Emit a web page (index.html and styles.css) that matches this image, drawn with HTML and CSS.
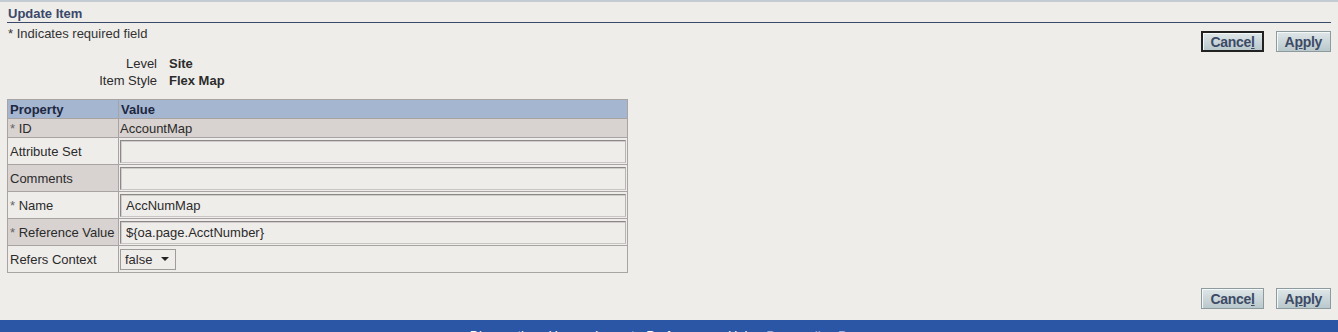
FILE: index.html
```html
<!DOCTYPE html>
<html lang="en">
<head>
    <meta charset="UTF-8">
    <title>Update Item</title>
    <link rel="stylesheet" href="styles.css">
</head>
<body>
    <div class="topline"></div>
    <div class="page">
        <h1 class="title">Update Item</h1>
        <div class="top-row">
            <div class="top-left">
                <div class="required">* Indicates required field</div>
                <div class="info">
                    <span class="info-label">Level</span><span class="info-value">Site</span>
                    <span class="info-label">Item Style</span><span class="info-value">Flex Map</span>
                </div>
            </div>
            <div class="buttons top-buttons">
                <button class="btn btn-default">Cance<u>l</u></button>
                <button class="btn">A<u>p</u>ply</button>
            </div>
        </div>

        <table class="props">
            <tr class="head">
                <th class="col-prop">Property</th>
                <th>Value</th>
            </tr>
            <tr class="row-id">
                <td class="shade"><span class="star">*</span> ID</td>
                <td>AccountMap</td>
            </tr>
            <tr>
                <td>Attribute Set</td>
                <td><input type="text" class="field"></td>
            </tr>
            <tr>
                <td class="shade">Comments</td>
                <td><input type="text" class="field"></td>
            </tr>
            <tr>
                <td><span class="star">*</span> Name</td>
                <td><input type="text" class="field" value="AccNumMap"></td>
            </tr>
            <tr>
                <td class="shade"><span class="star">*</span> Reference Value</td>
                <td><input type="text" class="field" value="${oa.page.AcctNumber}"></td>
            </tr>
            <tr>
                <td>Refers Context</td>
                <td>
                    <div class="select">false <span class="arrow"></span></div>
                </td>
            </tr>
        </table>

        <div class="buttons bottom-buttons">
            <button class="btn">Cance<u>l</u></button>
            <button class="btn">A<u>p</u>ply</button>
        </div>
    </div>
    <div class="footer">
        <a>Diagnostics</a>
        <a>Home</a>
        <a>Logout</a>
        <a>Preferences</a>
        <a>Help</a>
        <a class="dim">Personalize Page</a>
    </div>
</body>
</html>
```

FILE: styles.css
```css
body {
    margin: 0;
    background-color: #efedea;
    font-family: "Liberation Sans", Arial, sans-serif;
    font-size: 13px;
    color: #2b2b2b;
    overflow: hidden;
}
.topline {
    height: 2px;
    background-color: #c3cbd3;
}
.page {
    padding: 0 7px 0 7px;
}
.title {
    margin: 0;
    padding: 5px 1px 1px 1px;
    font-size: 13px;
    font-weight: bold;
    color: #3a4869;
    border-bottom: 1px solid #3a4869;
    line-height: 14px;
}
.top-row {
    display: flex;
    justify-content: space-between;
}
.required {
    padding: 4px 1px 0 1px;
    line-height: 14px;
    color: #333;
}
.info {
    display: grid;
    grid-template-columns: 150px auto;
    column-gap: 12px;
    row-gap: 3px;
    margin-top: 16px;
    line-height: 14px;
}
.info-label {
    text-align: right;
}
.info-value {
    font-weight: bold;
}
.buttons {
    display: flex;
    gap: 12px;
}
.top-buttons {
    margin-top: 8px;
    align-self: flex-start;
}
.bottom-buttons {
    justify-content: flex-end;
    margin-top: 15px;
}
.btn {
    font-family: "Liberation Sans", Arial, sans-serif;
    font-size: 14px;
    font-weight: bold;
    color: #3d4a66;
    height: 21px;
    padding: 0 8px;
    background: linear-gradient(#dfe6e8, #b9c8cc);
    border: 1px solid #8d9a9e;
    box-shadow: inset 1px 1px 0 #f4f7f8;
    letter-spacing: -0.3px;
}
.btn u {
    text-decoration: underline;
}
.btn-default {
    border: 2px solid #222;
    padding: 0 7px;
}
.props {
    border-collapse: collapse;
    margin-top: 11px;
    width: 621px;
    border: 1px solid #9a9696;
}
.props th,
.props td {
    border: 1px solid #a8a4a4;
    text-align: left;
    padding: 0 2px;
    height: 26px;
}
.props th {
    background-color: #a5b6d1;
    color: #1e2740;
    font-weight: bold;
    height: 18px;
    font-size: 13px;
}
.col-prop {
    width: 106px;
}
.props td.shade {
    background-color: #d8d2d0;
}
.props tr.row-id td {
    background-color: #d8d2d0;
    height: 18px;
}
.star {
    color: #666;
}
.props td:last-child {
    padding: 0 1px;
}
.field {
    display: block;
    box-sizing: border-box;
    width: 100%;
    height: 23px;
    margin: 0;
    padding: 0 5px;
    font-family: "Liberation Sans", Arial, sans-serif;
    font-size: 13px;
    color: #2b2b2b;
    background-color: #efedea;
    border: 1px solid #8c8888;
    border-right-color: #b8b4b4;
    border-bottom-color: #c9c5c5;
    box-shadow: inset 1px 1px 0 #d0cccc;
}
.select {
    display: inline-flex;
    align-items: center;
    gap: 9px;
    box-sizing: border-box;
    height: 21px;
    padding: 0 6px 0 4px;
    border: 1px solid #a09c9c;
    background-color: #efedea;
}
.arrow {
    width: 0;
    height: 0;
    border-left: 4px solid transparent;
    border-right: 4px solid transparent;
    border-top: 4px solid #222;
}
.footer {
    margin-top: 11px;
    height: 20px;
    background-color: #2b56a6;
    text-align: center;
    padding-top: 8px;
    font-size: 13px;
    color: #fff;
}
.footer a {
    margin: 0 4px;
    color: #fff;
}
.footer a.dim {
    color: #9bb0dd;
}
```
